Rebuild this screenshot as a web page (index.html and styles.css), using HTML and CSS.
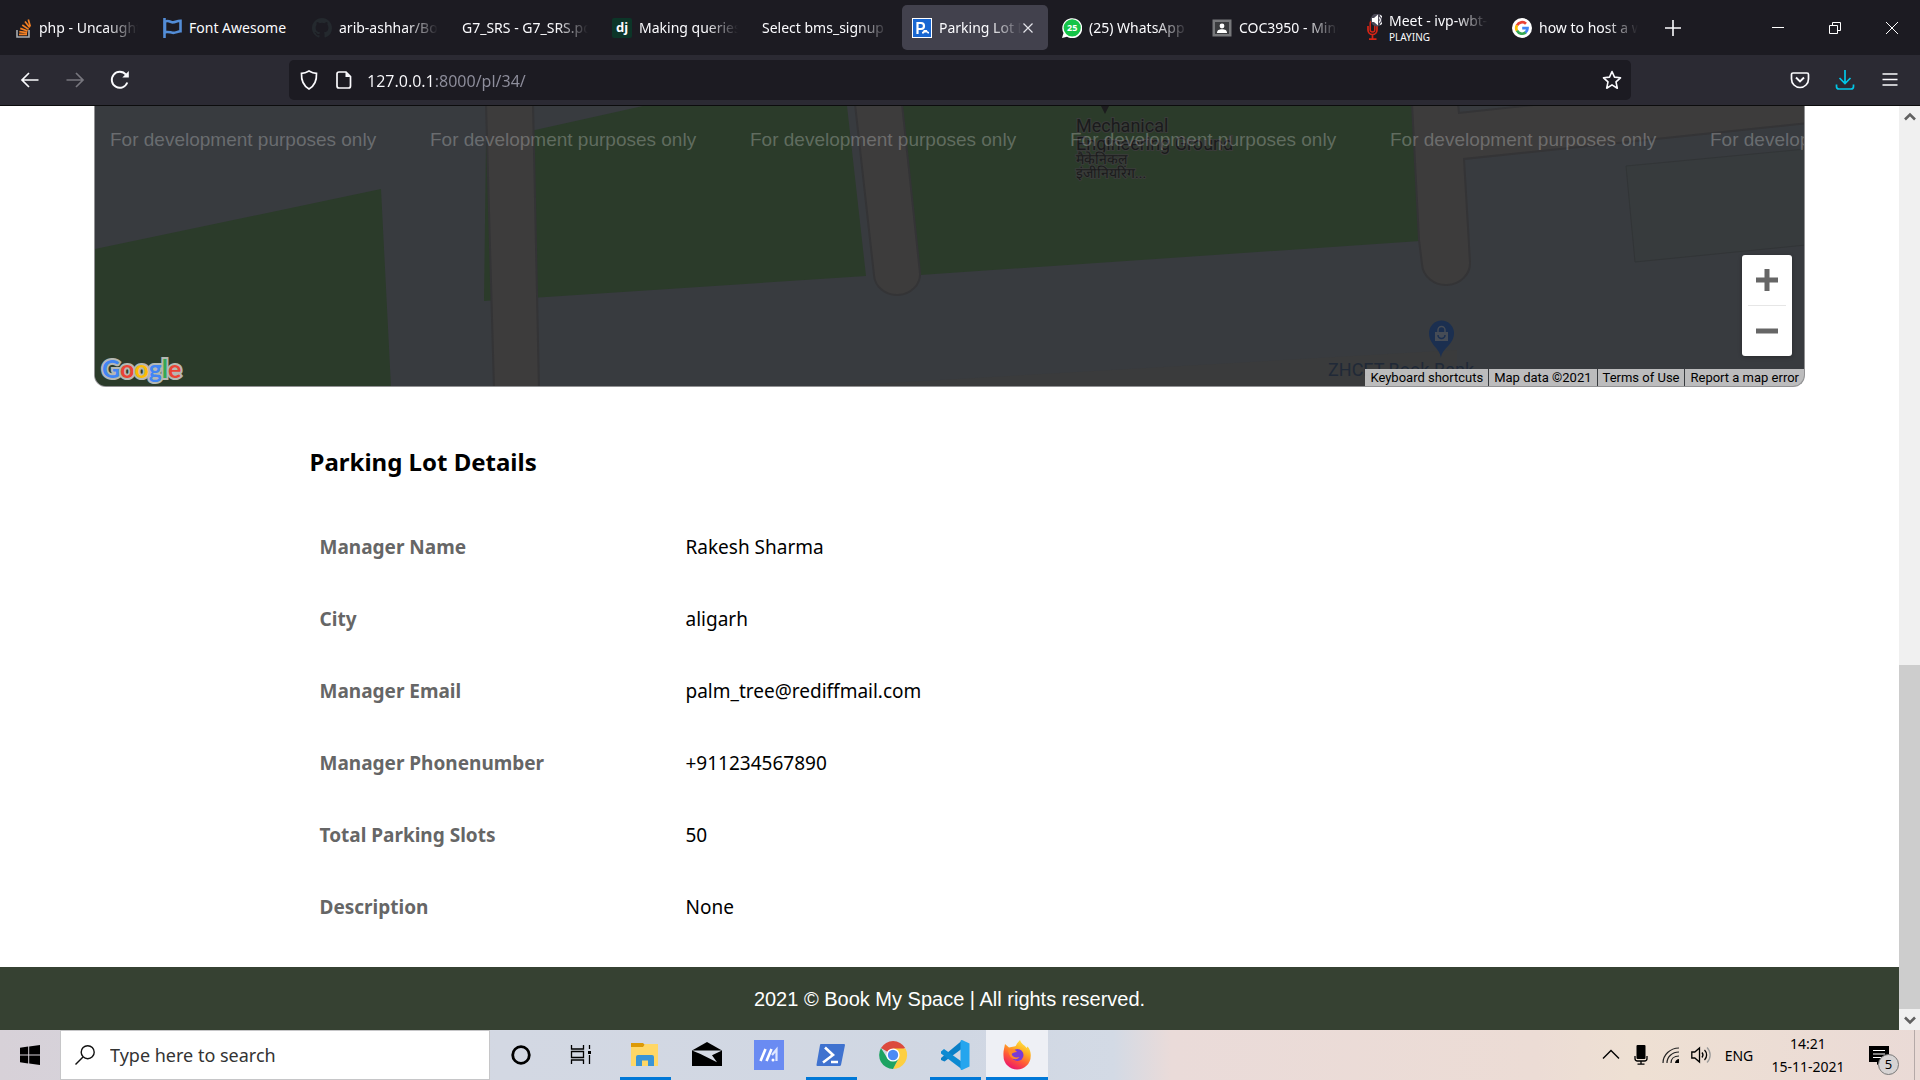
FILE: index.html
```html
<!DOCTYPE html>
<html lang="en">
<head>
<meta charset="utf-8">
<title>Parking Lot Details</title>
<link rel="stylesheet" href="styles.css">
</head>
<body>
<header class="browser">
  <div class="tabbar">
    <nav class="tabs" aria-label="Tabs">
      <div class="tab">
        <svg class="favicon" viewBox="0 0 20 20"><path d="M5 12v7h12v-7" fill="none" stroke="#a9adb1" stroke-width="1.6"/><path d="M7 16.4h8M7.300 13.600l7.800 1M8.300 10.400l7.300 2.600M10.300 7l6.300 4.400M13 3.600l4.700 6M16.300 1.500l2 7" stroke="#f48024" stroke-width="1.700"/></svg>
        <button class="tab-title" type="button">php - Uncaught Error</button>
      </div>
      <div class="tab">
        <svg class="favicon" viewBox="0 0 20 20"><path d="M2.500 0v20" stroke="#538dd7" stroke-width="2.600"/><path d="M3 3.500c4-2 6 1.500 8.500 .8 2.500-.6 4-1.500 7-1.500v10.500c-3 0-5 2-8 1.500-3-.5-4.500-1.500-7.500-.5z" fill="none" stroke="#538dd7" stroke-width="2.600"/></svg>
        <button class="tab-title tab-title-full" type="button">Font Awesome</button>
      </div>
      <div class="tab">
        <svg class="favicon" viewBox="0 0 16 16"><path fill="#24292e" d="M8 0C3.580 0 0 3.580 0 8c0 3.540 2.290 6.530 5.470 7.590.4.070.55-.17.55-.38 0-.19-.01-.82-.01-1.490-2.010.37-2.530-.49-2.690-.94-.09-.23-.48-.94-.82-1.130-.28-.15-.68-.52-.01-.53.63-.01 1.080.58 1.230.82.72 1.210 1.870.87 2.330.66.07-.52.28-.87.51-1.070-1.780-.2-3.640-.89-3.640-3.950 0-.87.31-1.590.82-2.150-.08-.2-.36-1.020.08-2.120 0 0 .67-.21 2.200.82a7.600 7.600 0 0 1 4 0c1.530-1.040 2.200-.82 2.200-.82.44 1.100.16 1.920.08 2.120.51.56.82 1.270.82 2.150 0 3.070-1.870 3.750-3.650 3.950.29.25.54.73.54 1.480 0 1.070-.01 1.930-.01 2.200 0 .21.15.46.55.38A8.010 8.010 0 0 0 16 8c0-4.420-3.580-8-8-8z"/></svg>
        <button class="tab-title" type="button">arib-ashhar/BookMySpace</button>
      </div>
      <div class="tab">
        <button class="tab-title" type="button">G7_SRS - G7_SRS.pdf</button>
      </div>
      <div class="tab">
        <span class="favicon favicon-dj">dj</span>
        <button class="tab-title" type="button">Making queries | Django</button>
      </div>
      <div class="tab">
        <button class="tab-title" type="button">Select bms_signup to</button>
      </div>
      <div class="tab tab-active">
        <svg class="favicon" viewBox="0 0 20 20"><rect width="20" height="20" fill="#fff"/><rect x="1" y="1" width="18" height="18" fill="#1967d2"/><path d="M5.500 16V5h3.500a3 3 0 0 1 0 6H5.500" fill="none" stroke="#fff" stroke-width="2.200"/><path d="M10 15.500v-1.500l1-.5.800-1.500h3l.9 1.500 1.300.5v1.500h-1.300l-.7-1h-2.400l-.7 1z" fill="#fff"/></svg>
        <button class="tab-title" type="button">Parking Lot Details</button>
        <button class="tab-close" type="button" aria-label="Close tab"><svg viewBox="0 0 12 12"><path d="M1.500 1.500l9 9M10.500 1.500l-9 9" stroke="#e4e4ea" stroke-width="1.200"/></svg></button>
      </div>
      <div class="tab">
        <svg class="favicon" viewBox="0 0 20 20"><path d="M0 20l1.500-5A10 10 0 1 1 5 18.700z" fill="#fff"/><circle cx="10.200" cy="9.800" r="8.600" fill="#15c447"/><text x="10.200" y="13.300" text-anchor="middle" class="wa-count">25</text></svg>
        <button class="tab-title" type="button">(25) WhatsApp Web</button>
      </div>
      <div class="tab">
        <svg class="favicon" viewBox="0 0 20 20"><rect x=".5" y="1.500" width="19" height="17" fill="#77787b"/><rect x="3" y="4" width="14" height="12" fill="#3a3b3e"/><circle cx="10" cy="8" r="2.400" fill="#fff"/><path d="M5 15c0-3 2-3.800 5-3.800s5 .8 5 3.800z" fill="#fff"/></svg>
        <button class="tab-title" type="button">COC3950 - Minor Project</button>
      </div>
      <div class="tab tab-media">
        <svg class="favicon" viewBox="0 0 20 28"><path d="M6 12v4a4 4 0 0 0 9 0v-4M10.500 20v5M7 25.200h7.500" fill="none" stroke="#d62516" stroke-width="1.700"/><rect x="8.200" y="7" width="4.600" height="11" rx="2.300" fill="none" stroke="#d62516" stroke-width="1.500"/><g transform="translate(2 -2)"><circle cx="13" cy="8" r="6.500" fill="#4a4856"/><path d="M8 6h2l4-3.500v11L10 10H8z" fill="#fff"/><path d="M15 5.500a3 3 0 0 1 0 5M16 3.500a5 5 0 0 1 0 9" fill="none" stroke="#fff" stroke-width="1.200"/></g></svg>
        <div class="tab-stack">
          <button class="tab-title" type="button">Meet - ivp-wbt-kqs</button>
          <span class="tab-note">PLAYING</span>
        </div>
      </div>
      <div class="tab">
        <svg class="favicon" viewBox="0 0 20 20"><circle cx="10" cy="10" r="10" fill="#fff"/><g fill="none" stroke-width="2.700"><path d="M14 5.800A5.700 5.700 0 0 0 5 7.300" stroke="#ea4335"/><path d="M5 7.200a5.700 5.700 0 0 0 0 5.600" stroke="#fbbc05"/><path d="M5 12.700a5.700 5.700 0 0 0 8.800 1.600" stroke="#34a853"/><path d="M13.500 14.500c1.400-1.200 2-2.500 2-4.300H10.200" stroke="#4285f4"/></g></svg>
        <button class="tab-title" type="button">how to host a website</button>
      </div>
      <button class="new-tab" type="button" aria-label="New tab"><svg viewBox="0 0 16 16"><path d="M8 0v16M0 8h16" stroke="#fbfbfe" stroke-width="1.600"/></svg></button>
    </nav>
    <div class="window-buttons">
      <button type="button" aria-label="Minimize"><svg viewBox="0 0 14 14"><path d="M1 6.500h12" stroke="#fff"/></svg></button>
      <button type="button" aria-label="Restore"><svg viewBox="0 0 14 14"><path d="M1.500 4.500h8v8h-8zM4.500 4V1.500h8v8H10" fill="none" stroke="#fff"/></svg></button>
      <button type="button" aria-label="Close"><svg viewBox="0 0 14 14"><path d="M1 1l12 12M13 1L1 13" stroke="#fff"/></svg></button>
    </div>
  </div>
  <div class="navbar">
    <div class="nav-buttons">
      <button type="button" aria-label="Back"><svg viewBox="0 0 20 20"><path d="M18.500 10H2M9 3l-7 7 7 7" fill="none" stroke="#fbfbfe" stroke-width="1.700"/></svg></button>
      <button type="button" aria-label="Forward"><svg viewBox="0 0 20 20"><path d="M1.500 10H18M11 3l7 7-7 7" fill="none" stroke="#77767e" stroke-width="1.700"/></svg></button>
      <button type="button" aria-label="Reload"><svg viewBox="0 0 20 20"><path d="M17.300 12.500A8 8 0 1 1 16 4.700" fill="none" stroke="#fbfbfe" stroke-width="1.900"/><path d="M18.800 1v6.500h-6.500z" fill="#fbfbfe"/></svg></button>
    </div>
    <div class="urlbar">
      <svg viewBox="0 0 20 20"><path d="M10 1c2.500 1.500 5 2.300 7.500 2.300.3 6.500-1.200 12.200-7.500 15.700C3.700 15.500 2.200 9.800 2.500 3.300 5 3.300 7.500 2.500 10 1z" fill="none" stroke="#fbfbfe" stroke-width="1.700"/></svg>
      <svg viewBox="0 0 20 20"><path d="M6 2h7l4.500 4.500V16a2 2 0 0 1-2 2H6a2 2 0 0 1-2-2V4a2 2 0 0 1 2-2z" fill="none" stroke="#fbfbfe" stroke-width="1.700"/><path d="M12.500 2v5h5z" fill="#fbfbfe"/></svg>
      <input class="url" type="text" aria-label="Address" value="127.0.0.1:8000/pl/34/">
      <button type="button" aria-label="Bookmark this page"><svg viewBox="0 0 20 20"><path d="M10 1.500l2.500 5.600 6 .7-4.500 4.100 1.300 6.300-5.300-3.300-5.300 3.300L6 11.900 1.500 7.800l6-.7z" fill="none" stroke="#fbfbfe" stroke-width="1.600" stroke-linejoin="round"/></svg></button>
    </div>
    <div class="nav-tools">
      <button type="button" aria-label="Pocket"><svg viewBox="0 0 20 20"><path d="M3 3h14a1.500 1.500 0 0 1 1.500 1.500V9a8.500 8.500 0 0 1-17 0V4.500A1.500 1.500 0 0 1 3 3z" fill="none" stroke="#fbfbfe" stroke-width="1.700"/><path d="M6 7.500l4 4 4-4" fill="none" stroke="#fbfbfe" stroke-width="1.900"/></svg></button>
      <button type="button" aria-label="Downloads"><svg viewBox="0 0 20 20"><path d="M10 0v13M4.500 8l5.500 5.500L15.500 8M1.500 14.500v2A2.500 2.500 0 0 0 4 19h12a2.500 2.500 0 0 0 2.500-2.500v-2" fill="none" stroke="#00c8e8" stroke-width="1.700"/></svg></button>
      <button type="button" aria-label="Menu"><svg viewBox="0 0 20 20"><path d="M2.500 4h15M2.500 9.500h15M2.500 15h15" stroke="#fbfbfe" stroke-width="1.500"/></svg></button>
    </div>
  </div>
</header>

<div class="viewport">
  <div class="page">
    <section class="map" aria-label="Map">
      <svg class="map-canvas" viewBox="95 106 1709 280" preserveAspectRatio="xMinYMax slice">
        <rect x="95" y="106" width="1710" height="281" fill="#383b3f"/>
        <path d="M820 387l637-37v37z" fill="#3a3b3c"/>
        <g fill="#2b3b2a">
          <path d="M95 249l286-60 10 198H95z"/>
          <path d="M484 301l2-160 157-35h204l19 170z"/>
          <path d="M902 106h512l6 135-500 34z"/>
        </g>
        <g fill="#3d3c3c" stroke="#343436" stroke-width="2">
          <path d="M486 104h47l6 285h-45z"/>
          <path d="M855 104l19 171a23 21 0 0 0 46-2l-18-169z"/>
          <path d="M1412 104l7 136 3 24a24 22 0 0 0 48-2l-6-103 345-36v-20z"/>
          <path d="M1458 104l1 9 84-9z" fill="#383b3f"/>
        </g>
        <path d="M1626 166l180-17v96l-171 17z" fill="#373b3d" stroke="#323537"/>
        <path d="M1101 106h8l-4 8z" fill="#1c1c1e"/>
        <g class="place">
          <text x="1076" y="132">Mechanical</text>
          <text x="1076" y="150">Engineering Ground</text>
          <text class="place-hindi" x="1076" y="164">मैकेनिकल</text>
          <text class="place-hindi" x="1076" y="178">इंजीनियरिंग...</text>
        </g>
        <path d="M1441 358c-1-10-12-13-12-25a12 12 0 0 1 25 0c0 12-12 15-13 25z" fill="#1b2f50"/>
        <path d="M1435 332h13v9h-13z" fill="#464c56"/><path d="M1438 332v-2a3 3 0 0 1 7 0v2" fill="none" stroke="#464c56" stroke-width="1.500"/><path d="M1438 335a3 3 0 0 0 7 0" fill="none" stroke="#1b2f50" stroke-width="1.500"/>
        <text class="place-shop" x="1328" y="376">ZHCET Book Bank</text>
        <g class="watermark">
          <text x="110" y="146">For development purposes only</text>
          <text x="430" y="146">For development purposes only</text>
          <text x="750" y="146">For development purposes only</text>
          <text x="1070" y="146">For development purposes only</text>
          <text x="1390" y="146">For development purposes only</text>
          <text x="1710" y="146">For development purposes only</text>
        </g>
      </svg>
      <a class="google" href="#" aria-label="Google"><span class="g-blue">G</span><span class="g-red">o</span><span class="g-yellow">o</span><span class="g-blue">g</span><span class="g-green">l</span><span class="g-red">e</span></a>
      <div class="zoom">
        <button type="button" aria-label="Zoom in"><svg viewBox="0 0 22 22"><path d="M11 0v22M0 11h22" stroke="#666" stroke-width="5"/></svg></button>
        <button type="button" aria-label="Zoom out"><svg viewBox="0 0 22 22"><path d="M0 11h22" stroke="#666" stroke-width="5"/></svg></button>
      </div>
      <div class="attribution">
        <button type="button">Keyboard shortcuts</button>
        <span>Map data ©2021</span>
        <a href="#">Terms of Use</a>
        <a href="#">Report a map error</a>
      </div>
    </section>

    <main class="details">
      <h2>Parking Lot Details</h2>
      <table>
        <tbody>
          <tr><th scope="row">Manager Name</th><td>Rakesh Sharma</td></tr>
          <tr><th scope="row">City</th><td>aligarh</td></tr>
          <tr><th scope="row">Manager Email</th><td>palm_tree@rediffmail.com</td></tr>
          <tr><th scope="row">Manager Phonenumber</th><td>+911234567890</td></tr>
          <tr><th scope="row">Total Parking Slots</th><td>50</td></tr>
          <tr><th scope="row">Description</th><td>None</td></tr>
        </tbody>
      </table>
    </main>

    <footer class="footer">2021 © Book My Space | All rights reserved.</footer>
  </div>
  <div class="scrollbar">
    <button type="button" aria-label="Scroll up"><svg viewBox="0 0 12 12"><path d="M1 8.500l5-5 5 5" fill="none" stroke="#606060" stroke-width="2.600"/></svg></button>
    <div class="track"><div class="thumb"></div></div>
    <button type="button" aria-label="Scroll down"><svg viewBox="0 0 12 12"><path d="M1 3.500l5 5 5-5" fill="none" stroke="#606060" stroke-width="2.600"/></svg></button>
  </div>
</div>

<div class="taskbar">
  <button class="start" type="button" aria-label="Start"><svg viewBox="0 0 20 20"><path d="M0 2.800l8.200-1.200v7.900H0zM9.200 1.400L20 0v9.500H9.200zM0 10.500h8.200v7.900L0 17.200zM9.200 10.500H20V20L9.200 18.600z"/></svg></button>
  <label class="search">
    <svg viewBox="0 0 20 20"><circle cx="12.700" cy="7.200" r="6.500" fill="none" stroke="#111" stroke-width="1.400"/><path d="M8 12L.5 19.500" stroke="#111" stroke-width="1.400"/></svg>
    <input type="text" aria-label="Search" placeholder="Type here to search">
  </label>
  <div class="apps">
    <button type="button" aria-label="Cortana"><svg viewBox="0 0 30 30"><circle cx="15" cy="15" r="8.300" fill="none" stroke="#000" stroke-width="2.800"/></svg></button>
    <button type="button" aria-label="Task view"><svg viewBox="0 0 30 30"><path d="M3.500 5v4h12V5M3.500 24v-4h12v4M3.500 11.500h12v6h-12zM21.500 5v4M21.500 15v9" fill="none" stroke="#000" stroke-width="1.300"/><path d="M20 11h3v3h-3z"/></svg></button>
    <button class="running" type="button" aria-label="File Explorer"><svg viewBox="0 0 30 30"><path d="M1 3h12l2 2v3H1z" fill="#dd9a06"/><path d="M1 7h12l2-3h13v22H1z" fill="#ffd766"/><path d="M6 26V17a2 2 0 0 1 2-2h14a2 2 0 0 1 2 2v9h-6v-5.500h-6V26z" fill="#3a94d6"/></svg></button>
    <button type="button" aria-label="Mail"><svg viewBox="0 0 30 30"><path d="M0 10.500L15 2l15 8.500V26H0z" fill="#000"/><path d="M0 10.500h30l-10 4.800 5 7L8.500 14z" fill="#d6dbe5"/></svg></button>
    <button type="button" aria-label="Media"><svg viewBox="0 0 30 30"><path d="M0 0h30v30H0z" fill="#6a8bf2"/><path d="M6.500 21l5-12M12.500 21l5-12" stroke="#fff" stroke-width="2.600"/><path d="M18 15l4.500-5.500V21" fill="none" stroke="#dfe7ff" stroke-width="2.200"/><circle cx="19" cy="20" r="1.500" fill="#fff"/></svg></button>
    <button class="running" type="button" aria-label="PowerShell"><svg viewBox="0 0 30 30"><path d="M5 4h23a1 1 0 0 1 1 1l-4 20a1.500 1.500 0 0 1-1.500 1H1.500a1 1 0 0 1-1-1.200L4 5a1 1 0 0 1 1-1z" fill="#3f72cf"/><path d="M9 7.500l8 7.500-10 7.500M15 22h7" fill="none" stroke="#fff" stroke-width="2.600"/></svg></button>
    <button type="button" aria-label="Chrome"><svg viewBox="0 0 30 30"><path d="M15 15L3 8a14 14 0 0 1 24.200 0z" fill="#dc4a3d"/><path d="M15 8.500h12.500a14 14 0 0 1-12.500 20.500l5.600-10.700z" fill="#fdcf41"/><path d="M3 8l6.500 10.500 11 0L15 29A14 14 0 0 1 3 8z" fill="#1da362"/><circle cx="15" cy="15" r="6.600" fill="#fff"/><circle cx="15" cy="15" r="5.200" fill="#4c8bf5"/></svg></button>
    <button class="running" type="button" aria-label="Visual Studio Code"><svg viewBox="0 0 30 30"><path d="M21.500 1v8L4.500 21.500 1 20v-2z" fill="#0a7fc7"/><path d="M1 11.500l3-2.500L21.500 21.500V29L1 13.500z" fill="#0c8ad2"/><path d="M22 0l7.500 3.500v23L22 30c-1 0-1.500-.5-1.500-1.500v-27C20.500.5 21 0 22 0z" fill="#25a5ee"/></svg></button>
    <button class="running current" type="button" aria-label="Firefox"><svg viewBox="0 0 30 30"><defs><linearGradient id="fox" x1="0.800" y1="0" x2="0.300" y2="1"><stop offset="0" stop-color="#fff04a"/><stop offset=".35" stop-color="#ffae22"/><stop offset=".65" stop-color="#ff5a36"/><stop offset="1" stop-color="#ea1170"/></linearGradient></defs><path d="M2 9l1-5 4 3.500 5-1c2 0 2-1 3-3l3-3.500c1 4 5 5 6.500 8l1-1.500C28 9 29 13 28.700 16A13.500 13.500 0 0 1 1.500 16C1.300 13 1.500 11 2 9z" fill="url(#fox)"/><circle cx="15.500" cy="15" r="6" fill="#7a3bd6"/><path d="M6 10c3-2 7-1 9 2-3 0-4 1-5.500 2 1 3 4 4 8 3-3 4-10 3-11.500-7z" fill="#ff8a2a"/></svg></button>
  </div>
  <div class="tray">
    <button type="button" aria-label="Show hidden icons"><svg viewBox="0 0 20 20"><path d="M2 13.500l8-8 8 8" fill="none" stroke="#000" stroke-width="1.400"/></svg></button>
    <button type="button" aria-label="Microphone"><svg viewBox="0 0 20 20"><rect x="5.500" y="0" width="9" height="14" rx="1"/><path d="M4 11v2.500a2.500 2.500 0 0 0 2.500 2.500h7a2.500 2.500 0 0 0 2.500-2.500V11M10 16v3M6.500 19.200h7" fill="none" stroke="#000" stroke-width="1.300"/></svg></button>
    <button type="button" aria-label="Network"><svg viewBox="0 0 20 20"><path d="M2 18C2 10 9 3 18 3M6 18c0-6 5-11 12-11M10 18c0-4 3-7 8-7" fill="none" stroke="#222" stroke-width="1.200"/><path d="M14 18c0-2 2-4 4-4v4z"/></svg></button>
    <button type="button" aria-label="Volume"><svg viewBox="0 0 20 20"><path d="M.8 7h3L8.500 3v14L3.800 13h-3z" fill="none" stroke="#000" stroke-width="1.300"/><path d="M11 7.500a4 4 0 0 1 0 5M13.500 5a7 7 0 0 1 0 10" fill="none" stroke="#000" stroke-width="1.300"/><path d="M16 2.500a10.500 10.500 0 0 1 0 15" fill="none" stroke="#999" stroke-width="1.300"/></svg></button>
    <button class="lang" type="button">ENG</button>
    <button class="clock" type="button"><span>14:21</span><span>15-11-2021</span></button>
    <button class="notify" type="button" aria-label="Notifications"><svg viewBox="0 0 20 20"><path d="M0 1h20v16h-8l-4 3v-3H0z"/><path d="M4 5.500h12M4 9h12M4 12.500h9" stroke="#fff" stroke-width="1.200"/></svg><span class="badge">5</span></button>
    <span class="show-desktop"></span>
  </div>
</div>
</body>
</html>
```
FILE: styles.css
```css
* {
  box-sizing: border-box;
}

body {
  margin: 0;
  min-height: 100vh;
  display: flex;
  flex-direction: column;
  font-family: "Noto Sans", "Open Sans", sans-serif;
  background: #fff;
  color: #000;
}

button,
input {
  margin: 0;
  padding: 0;
  border: 0;
  background: none;
  color: inherit;
  font: inherit;
}

button {
  display: flex;
  align-items: center;
  justify-content: center;
}

a {
  color: inherit;
  text-decoration: none;
}

svg {
  display: block;
  flex: none;
}

/* Browser chrome */
.browser {
  color: #fbfbfe;
  background: #2b2a33;
  border-bottom: 1px solid #0c0c0d;
}

.tabbar {
  display: flex;
  justify-content: space-between;
  height: 55px;
  background: #1c1b22;
}

.tabs {
  display: flex;
  flex: 1;
  min-width: 0;
}

.tab {
  flex: 0 1 146px;
  min-width: 0;
  display: flex;
  align-items: center;
  gap: 7px;
  margin: 5px 2px;
  padding: 0 10px;
  border-radius: 5px;
  font-size: 14px;
  line-height: 22px;
}

.tab-active {
  background: #42414d;
}

.favicon {
  width: 20px;
  height: 20px;
}

.favicon-dj {
  flex: none;
  border-radius: 2px;
  background: #0c3528;
  font-size: 13px;
  line-height: 18px;
  font-weight: 700;
  text-align: center;
}

.wa-count {
  fill: #fff;
  font-size: 9px;
  font-weight: 700;
}

.tab-title {
  flex: 1;
  min-width: 0;
  display: block;
  overflow: hidden;
  white-space: nowrap;
  text-align: left;
  -webkit-mask-image: linear-gradient(to left, transparent, #000 32px);
  mask-image: linear-gradient(to left, transparent, #000 32px);
}

.tab-title-full {
  -webkit-mask-image: none;
  mask-image: none;
}

.tab-close svg {
  width: 12px;
  height: 12px;
}

.tab-active {
  padding-right: 14px;
}

.tab-active .tab-title {
  margin-right: -7px;
}

.tab-media .favicon {
  height: 28px;
}

.tab-stack {
  flex: 1;
  min-width: 0;
  display: flex;
  flex-direction: column;
}

.tab-stack .tab-title {
  flex: none;
  line-height: 18px;
}

.tab-note {
  font-size: 10px;
  line-height: 14px;
}

.new-tab {
  width: 46px;
}

.new-tab svg {
  width: 16px;
  height: 16px;
}

.window-buttons {
  display: flex;
}

.window-buttons button {
  width: 57px;
}

.window-buttons svg {
  width: 14px;
  height: 14px;
}

.navbar {
  display: flex;
  align-items: center;
  height: 50px;
  padding: 0 8px 0 7px;
}

.navbar svg {
  width: 20px;
  height: 20px;
}

.nav-buttons {
  flex: 0 1 282px;
  display: flex;
}

.nav-buttons button,
.nav-tools button {
  width: 45px;
  height: 40px;
}

.urlbar {
  flex: 1;
  display: flex;
  align-items: center;
  gap: 14px;
  height: 40px;
  padding: 0 9px 0 10px;
  border-radius: 5px;
  background: #1c1b22;
}

.url {
  flex: 1;
  min-width: 0;
  height: 26px;
  padding-top: 2px;
  font-size: 16px;
  line-height: 24px;
  color: transparent;
  background: linear-gradient(to right, #fbfbfe 69px, #8f8f9d 69px);
  -webkit-background-clip: text;
  background-clip: text;
}

.nav-tools {
  flex: 0 1 281px;
  display: flex;
  justify-content: flex-end;
}

/* Page */
.viewport {
  flex: 1;
  display: flex;
}

.page {
  flex: 1;
  min-width: 0;
  display: flex;
  flex-direction: column;
}

.map {
  position: relative;
  height: 281px;
  margin: 0 94px;
  overflow: hidden;
  border: 1px solid #919193;
  border-top: 0;
  border-radius: 0 0 12px 12px;
}

.map-canvas {
  width: 100%;
  height: 100%;
}

.watermark {
  fill: #fff;
  fill-opacity: 0.26;
  font: 19px "Liberation Sans", sans-serif;
}

.place {
  fill: #1a1b1c;
  stroke: #3a3b3a;
  stroke-width: 2px;
  paint-order: stroke;
  font: 18px Roboto, sans-serif;
}

.place-hindi {
  font-size: 14px;
}

.place-shop {
  fill: #202937;
  font: 18px Roboto, sans-serif;
}

.google {
  position: absolute;
  left: 7px;
  bottom: 2px;
  font: 700 25px/32px Lato, sans-serif;
  -webkit-text-stroke: 4px #b5b8b3;
  paint-order: stroke;
}

.g-blue { color: #4285f4; }
.g-red { color: #ea4335; }
.g-yellow { color: #fbbc05; }
.g-green { color: #34a853; }

.zoom {
  position: absolute;
  right: 12px;
  bottom: 30px;
  width: 50px;
  padding: 0 6px;
  border-radius: 3px;
  background: #fff;
  box-shadow: 0 1px 4px rgba(0, 0, 0, 0.3);
}

.zoom button {
  width: 100%;
  height: 50px;
}

.zoom button + button {
  height: 51px;
  border-top: 1px solid #e6e6e6;
}

.zoom svg {
  width: 22px;
  height: 22px;
}

.attribution {
  position: absolute;
  right: 0;
  bottom: 0;
  display: flex;
  gap: 1px;
  font: 13px/17px Roboto, sans-serif;
}

.attribution > * {
  padding: 0 5px;
  background: rgba(200, 200, 200, 0.92);
}

.details {
  width: 90%;
  max-width: 1280px;
  margin: 0 auto;
  padding: 60px 0 24px;
}

.details h2 {
  margin: 0 0 34px;
  font-size: 24px;
  line-height: 30px;
  font-weight: 700;
}

.details table {
  width: 100%;
  border-collapse: collapse;
  font-size: 19px;
  line-height: 24px;
}

.details th,
.details td {
  height: 72px;
  padding: 0 10px;
  text-align: left;
}

.details th {
  width: 366px;
  color: #666;
}

.footer {
  margin-top: auto;
  padding: 21px 20px 19px;
  background: #364132;
  color: #fff;
  font: 20px/23px "Liberation Sans", sans-serif;
  text-align: center;
}

.scrollbar {
  width: 21px;
  display: flex;
  flex-direction: column;
  background: #f0f0f0;
}

.scrollbar button {
  height: 21px;
}

.scrollbar svg {
  width: 12px;
  height: 12px;
}

.track {
  flex: 1;
  display: flex;
  flex-direction: column;
  justify-content: flex-end;
}

.thumb {
  height: 39%;
  background: #cdcdcd;
}

/* Taskbar */
.taskbar {
  display: flex;
  height: 50px;
  background: linear-gradient(to right, #d7d1d8 0, #d3d8e3 26%, #d0d7e3 50%, #d3dae5 58%, #eadbd9 61%, #ecdcd5 80%, #eee0d3 85%, #eadad6 100%);
}

.start {
  width: 60px;
}

.start svg {
  width: 20px;
  height: 20px;
}

.search {
  flex: 0 1 430px;
  display: flex;
  align-items: center;
  gap: 15px;
  padding: 0 14px;
  border: 1px solid #c6c6c8;
  background: #fff;
}

.search svg {
  width: 20px;
  height: 20px;
}

.search input {
  flex: 1;
  min-width: 0;
  font-size: 18px;
  line-height: 26px;
}

.search input::placeholder {
  color: #333;
  opacity: 1;
}

.apps {
  display: flex;
}

.apps button {
  width: 62px;
  background: linear-gradient(#0078d7, #0078d7) center bottom / 0 3px no-repeat;
}

.apps .running {
  background-size: 51px 3px;
}

.apps .current {
  background-color: #eef0f5;
  background-size: 100% 3px;
}

.apps svg {
  width: 30px;
  height: 30px;
}

.tray {
  margin-left: auto;
  display: flex;
  font-size: 14px;
}

.tray > button {
  width: 30px;
}

.tray svg {
  width: 20px;
  height: 20px;
}

.tray .lang {
  width: 46px;
}

.tray .clock {
  width: 92px;
  flex-direction: column;
  line-height: 23px;
}

.tray .notify {
  position: relative;
  width: 50px;
}

.badge {
  position: absolute;
  right: 5px;
  bottom: 5px;
  width: 21px;
  height: 21px;
  border: 1px solid #777;
  border-radius: 50%;
  background: #d6d3d3;
  font-size: 13px;
  line-height: 19px;
}

.show-desktop {
  width: 6px;
  margin-left: 10px;
  border-left: 1px solid #b5a9a8;
}
```
